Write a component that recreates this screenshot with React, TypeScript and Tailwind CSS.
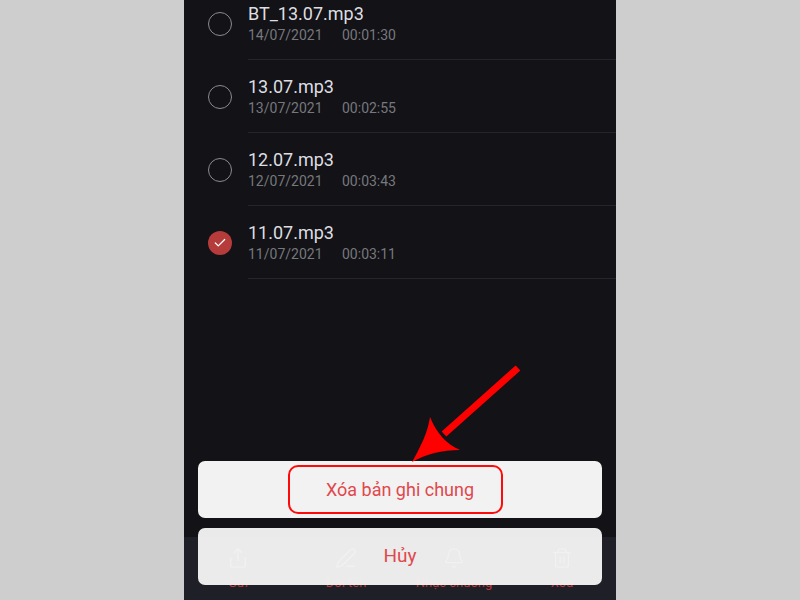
import { Share, PenLine, Bell, Trash2, Check } from 'lucide-react';

const recordings = [
  { name: 'BT_13.07.mp3', date: '14/07/2021', duration: '00:01:30', checked: false },
  { name: '13.07.mp3', date: '13/07/2021', duration: '00:02:55', checked: false },
  { name: '12.07.mp3', date: '12/07/2021', duration: '00:03:43', checked: false },
  { name: '11.07.mp3', date: '11/07/2021', duration: '00:03:11', checked: true },
];

const actions = [
  { label: 'Gửi', Icon: Share },
  { label: 'Đổi tên', Icon: PenLine },
  { label: 'Nhạc chuông', Icon: Bell },
  { label: 'Xóa', Icon: Trash2 },
];

function RecordingRow({ name, date, duration, checked }: (typeof recordings)[number]) {
  return (
    <div className="flex h-[73px] items-stretch">
      <div className="flex w-[64px] shrink-0 items-center pl-[24px]">
        {checked ? (
          <div className="flex h-[24px] w-[24px] items-center justify-center rounded-full bg-[#b63b3b]">
            <Check className="h-[14px] w-[14px] text-white" strokeWidth={2.2} />
          </div>
        ) : (
          <div className="h-[24px] w-[24px] rounded-full border border-[#8c8c8e]" />
        )}
      </div>
      <div className="flex flex-1 flex-col justify-center border-b border-[#25262b] pt-[1px]">
        <div className="text-[18px] leading-[21px] text-[#dedee0]">{name}</div>
        <div className="mt-[3px] flex text-[14px] leading-[17px] text-[#77787c]">
          <span className="w-[94px]">{date}</span>
          <span>{duration}</span>
        </div>
      </div>
    </div>
  );
}

export default function App() {
  return (
    <div className="flex h-[600px] w-[800px] justify-center bg-[#cecece] font-['Roboto',sans-serif]">
      <div className="relative flex h-full w-[432px] flex-col overflow-hidden bg-[#121217]">
        <div className="-mt-[13px]">
          {recordings.map((r) => (
            <RecordingRow key={r.name} {...r} />
          ))}
        </div>
        <div className="flex-1" />

        {/* bottom toolbar, mostly hidden by the sheet */}
        <div className="grid h-[63px] grid-cols-4 bg-[#1f2027]">
          {actions.map(({ label, Icon }) => (
            <div key={label} className="flex flex-col items-center pt-[10px]">
              <Icon className="h-[22px] w-[22px] text-[#d8d8d8]" strokeWidth={1.5} />
              <span className="mt-[6px] text-[13px] leading-[15px] text-[#b8393a]">{label}</span>
            </div>
          ))}
        </div>

        {/* action sheet */}
        <div className="absolute left-[14px] right-[14px] top-[461px] flex flex-col gap-[10px]">
          <div className="flex h-[57px] items-center justify-center rounded-[7px] bg-[#f2f2f2]">
            <div className="mr-[10px] flex h-[49px] w-[215px] items-center justify-center rounded-[10px] border-2 border-[#ff0a0a]">
              <span className="ml-[10px] text-[18px] text-[#e0484d]">Xóa bản ghi chung</span>
            </div>
          </div>
          <div className="flex h-[57px] items-center justify-center rounded-[7px] bg-[#f2f2f2]/[0.97]">
            <span className="text-[19px] text-[#e0484d]">Hủy</span>
          </div>
        </div>

        {/* pointer arrow */}
        <svg className="absolute left-0 top-0" width="432" height="600" viewBox="0 0 432 600">
          <line x1="334" y1="368" x2="260" y2="434" stroke="#ff0000" strokeWidth="7" />
          <path d="M228 462 C236 448 244 432 246 417 C252 432 262 444 276 450 C258 450 242 454 228 462 Z" fill="#ff0000" />
        </svg>
      </div>
    </div>
  );
}
